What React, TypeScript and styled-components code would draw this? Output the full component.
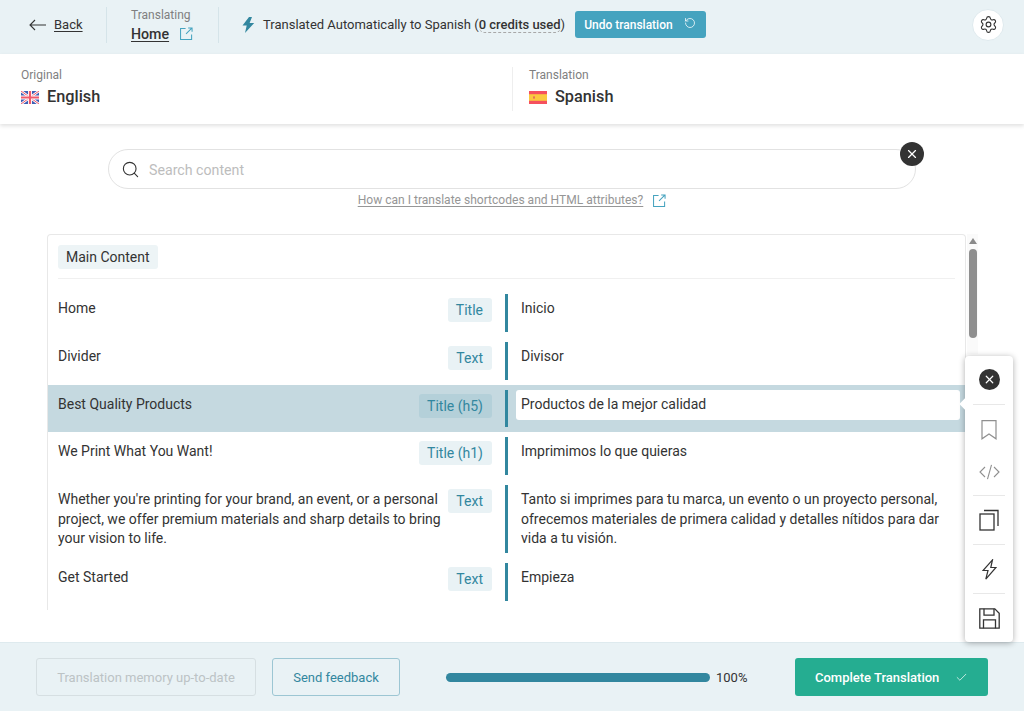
import React from 'react';
import styled, { createGlobalStyle } from 'styled-components';
import { Check, RotateCcw, Search, Settings, X } from 'lucide-react';

const colors = {
  panel: '#e9f2f5',
  teal: '#32879f',
  tealLight: '#45a3bf',
  green: '#25ad91',
  text: '#333333',
  label: '#7f7f7f',
  line: '#d5e4e9',
  highlight: '#c5d9e0',
};

const GlobalStyle = createGlobalStyle`
  html, body {
    margin: 0;
    padding: 0;
    background: #ffffff;
    font-family: Roboto, "Liberation Sans", sans-serif;
    color: ${colors.text};
  }
`;

const Page = styled.div`
  position: relative;
  display: flex;
  flex-direction: column;
  width: 1024px;
  height: 711px;
  overflow: hidden;
`;

const Header = styled.header`
  display: flex;
  align-items: center;
  box-sizing: border-box;
  height: 54px;
  flex: none;
  padding: 0 20px 5px 29px;
  background: ${colors.panel};
`;

const BackLink = styled.a`
  display: flex;
  align-items: center;
  gap: 8px;
  width: 77px;
  font-size: 13px;
  color: ${colors.text};
  text-decoration: underline;
  text-underline-offset: 2px;
`;

const HeaderDivider = styled.div`
  width: 1px;
  height: 36px;
  background: ${colors.line};
`;

const PageInfo = styled.div`
  display: flex;
  flex-direction: column;
  width: 87px;
  padding-left: 24px;
`;

const SmallLabel = styled.span`
  font-size: 12px;
  line-height: 16px;
  color: ${colors.label};
`;

const PageName = styled.div`
  display: flex;
  align-items: center;
  gap: 11px;
  margin-top: 2px;
  font-size: 14.2px;
  font-weight: 500;
  line-height: 18px;
  span {
    text-decoration: underline;
    text-underline-offset: 2px;
  }
`;

const StatusRow = styled.div`
  display: flex;
  align-items: center;
  flex: 1;
  padding-left: 23px;
  font-size: 13px;
`;

const StatusText = styled.span`
  margin-left: 8px;
  white-space: nowrap;
`;

const Credits = styled.span`
  font-weight: 500;
  border-bottom: 1px dashed #a8a8a8;
  border-radius: 0 0 6px 6px;
`;

const UndoButton = styled.button`
  display: flex;
  align-items: center;
  justify-content: space-between;
  box-sizing: border-box;
  width: 131px;
  height: 27px;
  margin-left: 10px;
  padding: 0 10px 0 9px;
  border: 0;
  border-radius: 3px;
  background: ${colors.tealLight};
  color: #ffffff;
  font-family: inherit;
  font-size: 12px;
  font-weight: 500;
  svg {
    margin-bottom: 4px;
  }
`;

const SettingsButton = styled.button`
  display: flex;
  align-items: center;
  justify-content: center;
  width: 32px;
  height: 32px;
  padding: 0;
  border: 1px solid #dfeaee;
  border-radius: 50%;
  background: #ffffff;
  color: ${colors.text};
`;

const LanguageBar = styled.div`
  position: relative;
  z-index: 1;
  display: grid;
  grid-template-columns: 512px 512px;
  flex: none;
  height: 70px;
  background: #ffffff;
  box-shadow: 0 2px 4px rgba(0, 0, 0, 0.12);
`;

const LanguageCell = styled.div<{ $divided?: boolean }>`
  display: flex;
  flex-direction: column;
  align-self: center;
  height: 44px;
  padding-left: ${(p) => (p.$divided ? '16px' : '21px')};
  border-left: ${(p) => (p.$divided ? '1px solid #eeeeee' : '0')};
`;

const LanguageName = styled.div`
  display: flex;
  align-items: center;
  gap: 8px;
  margin-top: 3px;
  font-size: 16.3px;
  font-weight: 500;
  line-height: 22px;
`;

const Main = styled.main`
  flex: 1;
  min-height: 0;
  padding-top: 25px;
`;

const SearchBox = styled.div`
  position: relative;
  display: flex;
  align-items: center;
  box-sizing: border-box;
  width: 808px;
  height: 40px;
  margin-left: 108px;
  padding-left: 12px;
  border: 1px solid #e2e2e2;
  border-radius: 20px;
`;

const SearchText = styled.span`
  margin: 1px 0 0 9px;
  font-size: 14.2px;
  color: #bdbdbd;
`;

const ClearButton = styled.span`
  position: absolute;
  top: -8px;
  right: -9px;
  display: flex;
  align-items: center;
  justify-content: center;
  width: 24px;
  height: 24px;
  border-radius: 50%;
  background: #333333;
  color: #ffffff;
`;

const HelpRow = styled.div`
  display: flex;
  align-items: center;
  justify-content: center;
  gap: 10px;
  box-sizing: border-box;
  width: 808px;
  height: 20px;
  margin: 1px 0 0 108px;
  font-size: 12.05px;
  color: #969696;
  u {
    text-underline-offset: 2px;
  }
`;

const ContentRow = styled.div`
  display: flex;
  height: 376px;
  margin: 24px 0 0 47px;
`;

const Card = styled.section`
  box-sizing: border-box;
  width: 919px;
  height: 100%;
  overflow: hidden;
  border: 1px solid #e8e8e8;
  border-bottom: 0;
  border-radius: 4px 4px 0 0;
`;

const SectionHead = styled.div`
  margin: 0 10px;
  padding: 10px 0 9px;
  border-bottom: 1px solid #f0f0f0;
`;

const SectionTag = styled.span`
  display: inline-block;
  padding: 0 8px;
  height: 24px;
  line-height: 24px;
  border-radius: 3px;
  background: #edf4f6;
  font-size: 14px;
`;

const Rows = styled.div`
  padding-top: 10px;
`;

const Row = styled.div<{ $active?: boolean }>`
  display: grid;
  grid-template-columns: 457px 1fr;
  padding: 5px 0;
  background: ${(p) => (p.$active ? colors.highlight : 'transparent')};
`;

const SourceCell = styled.div`
  display: flex;
  justify-content: space-between;
  align-items: flex-start;
  padding: 0 13px 0 10px;
  min-height: 37.75px;
`;

const RowText = styled.div`
  padding: 5px 0 4.5px;
  font-size: 14px;
  line-height: 19.5px;
`;

const SourceText = styled(RowText)`
  max-width: 390px;
`;

const TypeTag = styled.span<{ $active?: boolean }>`
  flex: none;
  height: 24px;
  margin-top: 4px;
  padding: 0 9px 0 8px;
  line-height: 24px;
  border-radius: 3px;
  background: ${(p) => (p.$active ? '#b4d0d9' : '#e9f2f5')};
  color: ${colors.teal};
  font-size: 14px;
`;

const TargetCell = styled.div`
  padding-left: 13px;
  padding-right: 18px;
  border-left: 3px solid ${colors.teal};
`;

const ActiveInput = styled.div`
  position: relative;
  box-sizing: border-box;
  width: 444px;
  height: 30px;
  margin: 0 0 0 -5px;
  padding: 0 5px;
  border-radius: 3px;
  background: #ffffff;
  font-size: 14px;
  line-height: 29px;
`;

const ScrollTrack = styled.div`
  display: flex;
  flex-direction: column;
  align-items: center;
  width: 11px;
  height: 120px;
  margin-left: 1px;
  background: #fafafa;
`;

const ScrollArrow = styled.div`
  width: 0;
  height: 0;
  margin-top: 4px;
  border: 4px solid transparent;
  border-top: 0;
  border-bottom: 6px solid #8a8a8a;
`;

const ScrollThumb = styled.div`
  width: 8px;
  height: 89px;
  margin-top: 5px;
  border-radius: 4px;
  background: #8f8f8f;
`;

const ToolPanel = styled.aside`
  position: absolute;
  z-index: 2;
  top: 356px;
  left: 965px;
  display: flex;
  flex-direction: column;
  box-sizing: border-box;
  width: 48px;
  height: 286px;
  border-radius: 4px;
  background: #ffffff;
  box-shadow: 0 1px 6px rgba(0, 0, 0, 0.32);
  &::before {
    content: '';
    position: absolute;
    left: -4px;
    top: 44px;
    width: 8px;
    height: 8px;
    background: #ffffff;
    transform: rotate(45deg);
  }
`;

const ToolGroup = styled.div<{ $height: number; $last?: boolean }>`
  position: relative;
  display: flex;
  flex-direction: column;
  align-items: center;
  justify-content: center;
  box-sizing: border-box;
  height: ${(p) => p.$height}px;
  margin: 0 8px;
  border-bottom: ${(p) => (p.$last ? '0' : '1px solid #e8e8e8')};
`;

const CloseGroup = styled(ToolGroup)`
  padding-bottom: 2px;
`;

const MarkupGroup = styled(ToolGroup)`
  gap: 24px;
`;

const CloseDot = styled.span`
  display: flex;
  align-items: center;
  justify-content: center;
  width: 21px;
  height: 21px;
  border-radius: 50%;
  background: #333333;
  color: #ffffff;
`;

const Footer = styled.footer`
  display: flex;
  align-items: center;
  flex: none;
  height: 69px;
  padding-left: 36px;
  background: ${colors.panel};
  border-top: 1px solid #deeaee;
  box-sizing: border-box;
`;

const OutlineButton = styled.button<{ $disabled?: boolean; $width: number }>`
  width: ${(p) => p.$width}px;
  height: 38px;
  margin-right: 16px;
  padding: 0;
  border: 1px solid ${(p) => (p.$disabled ? '#d6dfe2' : '#9cc6d3')};
  border-radius: 3px;
  background: transparent;
  color: ${(p) => (p.$disabled ? '#bcc3c5' : colors.teal)};
  font-family: inherit;
  font-size: 13px;
`;

const ProgressWrap = styled.div`
  display: flex;
  align-items: center;
  gap: 6px;
  width: 349px;
  margin-left: 30px;
  font-size: 13px;
`;

const ProgressBar = styled.div`
  width: 264px;
  height: 9px;
  border-radius: 5px;
  background: ${colors.teal};
`;

const CompleteButton = styled.button`
  display: flex;
  align-items: center;
  justify-content: space-between;
  width: 193px;
  height: 38px;
  padding: 0 20px;
  border: 0;
  border-radius: 3px;
  background: ${colors.green};
  color: #ffffff;
  font-family: inherit;
  font-size: 13px;
  font-weight: 500;
`;

const OpenIcon = ({ size = 13 }: { size?: number }) => (
  <svg width={size} height={size} viewBox="0 0 14 14" fill="none" stroke={colors.tealLight} strokeWidth="1.1">
    <path d="M6 1.5H.6v11.9h11.9V8" />
    <path d="M6.5 7.5 13 1M8.8 1H13v4.2" />
  </svg>
);

const ThinArrow = () => (
  <svg width="17" height="12" viewBox="0 0 17 12" fill="none" stroke="#333" strokeWidth="1.1">
    <path d="M17 6H1M6 1 1 6l5 5" />
  </svg>
);

const FilledBolt = () => (
  <svg width="13" height="16" viewBox="0 0 13 16" fill={colors.teal}>
    <path d="M7 0 .5 8.6h4.2L3 16l9.2-10H7.6L10 0Z" />
  </svg>
);

const UkFlag = () => (
  <svg width="18" height="13" viewBox="0 0 18 13">
    <rect width="18" height="13" fill="#3f5fb5" />
    <path d="M0 0 18 13M18 0 0 13" stroke="#fff" strokeWidth="2.6" />
    <path d="M0 0 18 13M18 0 0 13" stroke="#f0596b" strokeWidth="1" />
    <path d="M9 0v13M0 6.5h18" stroke="#fff" strokeWidth="4" />
    <path d="M9 0v13M0 6.5h18" stroke="#f0596b" strokeWidth="2.2" />
  </svg>
);

const EsFlag = () => (
  <svg width="18" height="13" viewBox="0 0 18 13">
    <rect width="18" height="13" fill="#f5505e" />
    <rect y="3.2" width="18" height="6.6" fill="#fbc93f" />
    <rect x="4" y="5.4" width="2" height="2.2" fill="#e8715a" />
  </svg>
);

const BookmarkIcon = () => (
  <svg width="16" height="20" viewBox="0 0 16 20" fill="none" stroke="#8f8f8f" strokeWidth="1.2">
    <path d="M1 .6h14v18.2L8 14l-7 4.8Z" />
  </svg>
);

const CodeIcon = () => (
  <svg width="21" height="16" viewBox="0 0 21 16" fill="none" stroke="#8f8f8f" strokeWidth="1.1">
    <path d="M6 3 1 8l5 5M15 3l5 5-5 5M12.5.8 8.5 15.2" />
  </svg>
);

const CopyIcon = () => (
  <svg width="20" height="22" viewBox="0 0 20 22" fill="none" stroke="#333" strokeWidth="1.3">
    <rect x="1" y="5" width="14" height="16" />
    <path d="M5 1.5h14V17" />
  </svg>
);

const BoltIcon = () => (
  <svg width="15" height="21" viewBox="0 0 15 21" fill="none" stroke="#333" strokeWidth="1.2" strokeLinejoin="miter">
    <path d="M10.5.8 1 11.5h5L3.8 20.2 14 8.5H8.8Z" />
  </svg>
);

const SaveIcon = () => (
  <svg width="21" height="21" viewBox="0 0 21 21" fill="none" stroke="#333" strokeWidth="1.3">
    <path d="M.8.8h15l4.4 4.4v15H.8Z" />
    <path d="M5 .8v6.4h10V.8M4.5 20.2v-8.4h12v8.4" />
  </svg>
);

const rows = [
  { source: 'Home', type: 'Title', target: 'Inicio' },
  { source: 'Divider', type: 'Text', target: 'Divisor' },
  { source: 'Best Quality Products', type: 'Title (h5)', target: 'Productos de la mejor calidad', active: true },
  { source: 'We Print What You Want!', type: 'Title (h1)', target: 'Imprimimos lo que quieras' },
  {
    source:
      "Whether you're printing for your brand, an event, or a personal project, we offer premium materials and sharp details to bring your vision to life.",
    type: 'Text',
    target:
      'Tanto si imprimes para tu marca, un evento o un proyecto personal, ofrecemos materiales de primera calidad y detalles nítidos para dar vida a tu visión.',
  },
  { source: 'Get Started', type: 'Text', target: 'Empieza' },
];

const App = () => (
  <Page>
    <GlobalStyle />
    <Header>
      <BackLink>
        <ThinArrow />
        Back
      </BackLink>
      <HeaderDivider />
      <PageInfo>
        <SmallLabel>Translating</SmallLabel>
        <PageName>
          <span>Home</span>
          <OpenIcon />
        </PageName>
      </PageInfo>
      <HeaderDivider />
      <StatusRow>
        <FilledBolt />
        <StatusText>
          Translated Automatically to Spanish (<Credits>0 credits used</Credits>)
        </StatusText>
        <UndoButton>
          Undo translation
          <RotateCcw size={12} strokeWidth={1.5} />
        </UndoButton>
      </StatusRow>
      <SettingsButton>
        <Settings size={19} strokeWidth={1.4} />
      </SettingsButton>
    </Header>

    <LanguageBar>
      <LanguageCell>
        <SmallLabel>Original</SmallLabel>
        <LanguageName>
          <UkFlag />
          English
        </LanguageName>
      </LanguageCell>
      <LanguageCell $divided>
        <SmallLabel>Translation</SmallLabel>
        <LanguageName>
          <EsFlag />
          Spanish
        </LanguageName>
      </LanguageCell>
    </LanguageBar>

    <Main>
      <SearchBox>
        <Search size={19} strokeWidth={1.4} />
        <SearchText>Search content</SearchText>
        <ClearButton>
          <X size={14} strokeWidth={2} />
        </ClearButton>
      </SearchBox>
      <HelpRow>
        <u>How can I translate shortcodes and HTML attributes?</u>
        <OpenIcon />
      </HelpRow>
      <ContentRow>
        <Card>
          <SectionHead>
            <SectionTag>Main Content</SectionTag>
          </SectionHead>
          <Rows>
            {rows.map((row) => (
              <Row key={row.source} $active={row.active}>
                <SourceCell>
                  <SourceText>{row.source}</SourceText>
                  <TypeTag $active={row.active}>{row.type}</TypeTag>
                </SourceCell>
                <TargetCell>
                  {row.active ? <ActiveInput>{row.target}</ActiveInput> : <RowText>{row.target}</RowText>}
                </TargetCell>
              </Row>
            ))}
          </Rows>
        </Card>
        <ScrollTrack>
          <ScrollArrow />
          <ScrollThumb />
        </ScrollTrack>
      </ContentRow>
    </Main>

    <ToolPanel>
      <CloseGroup $height={49}>
        <CloseDot>
          <X size={13} strokeWidth={2.2} />
        </CloseDot>
      </CloseGroup>
      <MarkupGroup $height={91}>
        <BookmarkIcon />
        <CodeIcon />
      </MarkupGroup>
      <ToolGroup $height={49}>
        <CopyIcon />
      </ToolGroup>
      <ToolGroup $height={49}>
        <BoltIcon />
      </ToolGroup>
      <ToolGroup $height={48} $last>
        <SaveIcon />
      </ToolGroup>
    </ToolPanel>

    <Footer>
      <OutlineButton $disabled $width={220}>
        Translation memory up-to-date
      </OutlineButton>
      <OutlineButton $width={128}>Send feedback</OutlineButton>
      <ProgressWrap>
        <ProgressBar />
        100%
      </ProgressWrap>
      <CompleteButton>
        Complete Translation
        <Check size={13} strokeWidth={1.3} />
      </CompleteButton>
    </Footer>
  </Page>
);

export default App;
